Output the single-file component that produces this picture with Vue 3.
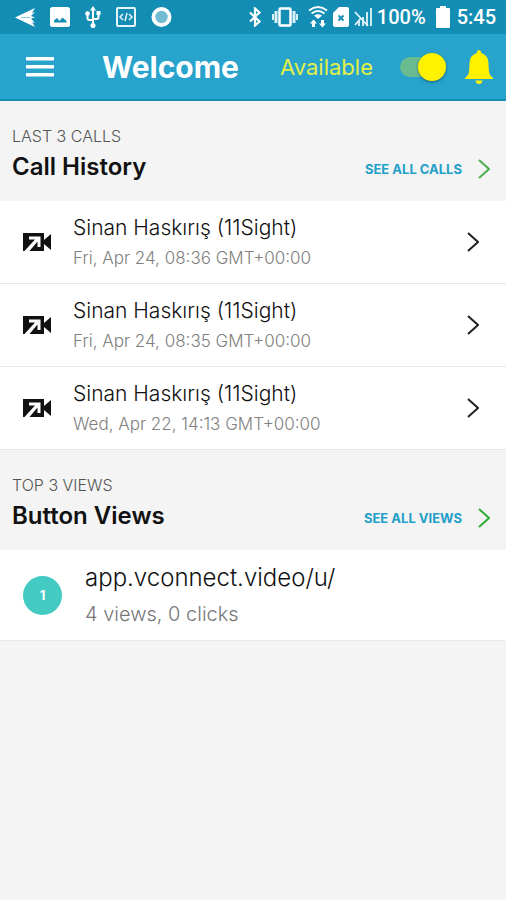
<script setup>
import { ref } from 'vue'

const available = ref(true)

const calls = [
  { id: 1, name: 'Sinan Haskırış (11Sight)', time: 'Fri, Apr 24, 08:36 GMT+00:00' },
  { id: 2, name: 'Sinan Haskırış (11Sight)', time: 'Fri, Apr 24, 08:35 GMT+00:00' },
  { id: 3, name: 'Sinan Haskırış (11Sight)', time: 'Wed, Apr 22, 14:13 GMT+00:00' },
]

const views = [{ rank: 1, url: 'app.vconnect.video/u/', stats: '4 views, 0 clicks' }]
</script>

<template>
  <div class="screen">
    <div class="status">
      <div class="status-left">
        <svg width="20" height="20" viewBox="0 0 20 20" fill="#fff">
          <path d="M0 10.500L20 1l-3 5 3-1-4 4 4 1.500-4 1 4 4.500-3-1 3 5z" />
          <path d="M6 10.500h9" stroke="#148db4" stroke-width=".5" />
        </svg>
        <svg width="20" height="20" viewBox="0 0 20 20">
          <rect width="20" height="20" rx="2.500" fill="#fff" />
          <path d="M4 15.500v-2l3-2.500 2.500 3 3-3.500 4 3.500v1.500z" fill="#148db4" />
        </svg>
        <svg width="16" height="22" viewBox="0 0 16 22" fill="none" stroke="#fff" stroke-width="2">
          <path d="M8 3v16M2.500 8v4q0 2 2 2H8M13.500 7v4q0 2-2 2H8" />
          <g fill="#fff" stroke="none">
            <path d="M8 0l3 4.500H5z" />
            <circle cx="8" cy="19.500" r="2.500" />
            <circle cx="2.500" cy="7.500" r="2.300" />
            <path d="M11.500 5h4v4h-4z" />
          </g>
        </svg>
        <svg width="20" height="20" viewBox="0 0 20 20" fill="none" stroke="#e4f5fb">
          <rect x="1" y="1" width="18" height="18" rx="1" stroke-width="2" />
          <path d="M7 7l-3 3 3 3M13 7l3 3-3 3M11 6l-2 8" stroke-width="1.500" />
        </svg>
        <svg width="21" height="22" viewBox="0 0 22 22">
          <circle cx="11" cy="11" r="8.500" fill="#72bbd2" stroke="#fff" stroke-width="4" />
        </svg>
      </div>
      <div class="status-right">
        <svg class="spaced" width="14" height="20" viewBox="0 0 14 20" fill="none" stroke="#fff" stroke-width="2.200">
          <path d="M2 5.500l9.500 9L7 18.500v-17l4.500 4L2 14.500" />
        </svg>
        <svg class="spaced" width="26" height="20" viewBox="0 0 26 20" fill="none" stroke="#fff">
          <rect x="7.500" y="1.500" width="11" height="17" rx="1" stroke-width="2.500" />
          <path d="M4 4v12M22 4v12" stroke-width="3" stroke="#d8f0f8" />
          <path d="M1 7v6M25 7v6" stroke-width="2" stroke="#d8f0f8" />
        </svg>
        <svg width="20" height="22" viewBox="0 0 20 22" fill="none" stroke="#fff">
          <path d="M1 4.500q9-7 18 0M3.500 7.500q6.500-5 13 0" stroke-width="1.900" />
          <path d="M6 9.500q4-2.500 8 0L10 13z" fill="#fff" stroke="none" />
          <path d="M5.500 21v-4M14.500 14v4" stroke-width="3" />
          <path d="M5.500 13.500l3.500 4H2zM14.500 21.500l3.500-4h-7z" fill="#fff" stroke="none" />
        </svg>
        <svg width="16" height="20" viewBox="0 0 16 20">
          <path d="M6 0h8q2 0 2 2v16q0 2-2 2H2q-2 0-2-2V6z" fill="#fff" />
          <path d="M5.500 8.500l5 5m0-5l-5 5" stroke="#148db4" stroke-width="1.800" />
        </svg>
        <svg width="18" height="20" viewBox="0 0 18 20" fill="none" stroke="#e4f5fb">
          <path d="M17 1v18M13 5v14M9 10v9M5 14v5" stroke-width="1.800" />
          <path d="M1 5l13 14M7 11l-6 7" stroke-width="1.800" />
        </svg>
        <span class="spaced">100%</span>
        <svg width="14" height="22" viewBox="0 0 14 22" fill="#fff">
          <path d="M4 0h6v2h3q1 0 1 1v18q0 1-1 1H1q-1 0-1-1V3q0-1 1-1h3z" />
        </svg>
        <span class="clock">5:45</span>
      </div>
    </div>

    <header class="appbar">
      <button class="icon-button" type="button" aria-label="Menu">
        <svg width="28" height="20" viewBox="0 0 28 20" fill="#fff">
          <path d="M0 0h28v3.500H0zM0 8h28v3.500H0zM0 16h28v3.500H0z" />
        </svg>
      </button>
      <h1>Welcome</h1>
      <label class="available" for="availability">Available</label>
      <input id="availability" v-model="available" class="switch" type="checkbox" role="switch" />
      <button class="icon-button" type="button" aria-label="Notifications">
        <svg width="28" height="34" viewBox="0 0 28 34" fill="#fff200">
          <path d="M14 0q2 0 2.200 3Q23 5 23.500 13q0 9 1.500 12l3 3v1H0v-1l3-3q1.500-3 1.500-12Q5 5 11.800 3 12 0 14 0z" />
          <path d="M10.500 30.500h7q-.5 3.500-3.500 3.500t-3.500-3.500z" />
        </svg>
      </button>
    </header>

    <main>
      <section>
        <div class="section-head">
          <div>
            <p class="eyebrow">LAST 3 CALLS</p>
            <h2>Call History</h2>
          </div>
          <a class="see-all" href="#calls">
            SEE ALL CALLS
            <svg width="12" height="20" viewBox="0 0 12 20" fill="none" stroke="#4caf50" stroke-width="2">
              <path d="M1 1l10 9-10 9" />
            </svg>
          </a>
        </div>
        <ul>
          <li v-for="call in calls" :key="call.id">
            <a class="row call" href="#call">
              <svg width="28" height="18" viewBox="0 0 28 18">
                <path d="M0 0h21v18H0z" fill="#111" />
                <path d="M28 1v16l-7-6V7z" fill="#111" />
                <path d="M6 3.500h11.500V14h-3V8.500L6.500 18H1.500L12 6.500H6z" fill="#fff" />
              </svg>
              <span class="row-text">
                <span class="name">{{ call.name }}</span>
                <span class="time">{{ call.time }}</span>
              </span>
              <svg width="12" height="20" viewBox="0 0 12 20" fill="none" stroke="#222" stroke-width="2">
                <path d="M1 1l10 9-10 9" />
              </svg>
            </a>
          </li>
        </ul>
      </section>

      <section>
        <div class="section-head">
          <div>
            <p class="eyebrow">TOP 3 VIEWS</p>
            <h2>Button Views</h2>
          </div>
          <a class="see-all" href="#views">
            SEE ALL VIEWS
            <svg width="12" height="20" viewBox="0 0 12 20" fill="none" stroke="#2eae35" stroke-width="2">
              <path d="M1 1l10 9-10 9" />
            </svg>
          </a>
        </div>
        <ul>
          <li v-for="view in views" :key="view.rank">
            <a class="row view" href="#view">
              <span class="rank">{{ view.rank }}</span>
              <span class="row-text">
                <span class="url">{{ view.url }}</span>
                <span class="stats">{{ view.stats }}</span>
              </span>
            </a>
          </li>
        </ul>
      </section>
    </main>
  </div>
</template>

<style>
body {
  background: #f4f4f4;
}
</style>

<style scoped>
.screen {
  min-height: 100vh;
  background: #f4f4f4;
  color: #111;
  font-family: Inter, "Liberation Sans", sans-serif;
}

.screen * {
  box-sizing: border-box;
}

svg {
  display: block;
  flex: none;
}

.status {
  display: flex;
  align-items: center;
  justify-content: space-between;
  height: 34px;
  padding: 0 10px 0 15px;
  background: #148db4;
}

.status-left,
.status-right {
  display: flex;
  align-items: center;
}

.status-left {
  gap: 15px;
}

.status-right {
  gap: 5px;
  color: #fff;
  font: 500 20px/24px Roboto, sans-serif;
}

.spaced {
  margin-right: 5px;
}

.clock {
  margin-left: 2px;
}

.appbar {
  display: flex;
  align-items: center;
  height: 67px;
  padding: 0 13px 0 26px;
  border-bottom: 2px solid #148db4;
  background: #27a3cc;
}

.icon-button {
  padding: 0;
  border: 0;
  background: none;
}

h1 {
  flex: 1;
  margin: 0 0 0 48px;
  color: #fff;
  font-size: 30px;
  font-weight: 700;
  line-height: 36px;
}

.available {
  color: #e2f04a;
  font-size: 22px;
  line-height: 28px;
}

.switch {
  display: flex;
  flex: none;
  align-items: center;
  justify-content: flex-start;
  width: 46px;
  height: 20px;
  margin: 0 19px 0 27px;
  border-radius: 10px;
  background: #8fc4d6;
  appearance: none;
}

.switch::before {
  width: 28px;
  height: 28px;
  border-radius: 50%;
  background: #fff200;
  box-shadow: 0 1px 3px rgba(0, 0, 0, 0.4);
  content: "";
}

.switch:checked {
  justify-content: flex-end;
  background: #6bbb91;
}

.section-head {
  display: flex;
  align-items: center;
  justify-content: space-between;
  height: 100px;
  padding: 4px 16px 0 12px;
}

.eyebrow,
h2 {
  margin: 0;
}

.eyebrow {
  color: #555;
  font-size: 16px;
  font-weight: 300;
  line-height: 28px;
}

h2 {
  color: #111;
  font-size: 24px;
  font-weight: 600;
  line-height: 34px;
}

.see-all {
  display: flex;
  align-items: center;
  gap: 16px;
  padding-top: 32px;
  color: #239fc8;
  font-size: 13px;
  font-weight: 700;
  line-height: 20px;
  text-decoration: none;
}

ul {
  margin: 0;
  padding: 0;
  list-style: none;
}

.row {
  display: flex;
  align-items: center;
  border-bottom: 1px solid #e8e8e8;
  background: #fff;
  color: #111;
  text-decoration: none;
}

.row-text {
  display: flex;
  flex: 1;
  flex-direction: column;
  padding-top: 2px;
}

.call {
  gap: 22px;
  height: 83px;
  padding: 0 27px 0 23px;
}

.name {
  font-size: 21px;
  font-weight: 300;
  line-height: 30px;
}

.time {
  color: #808080;
  font-size: 17px;
  font-weight: 300;
  line-height: 30px;
}

.view {
  gap: 23px;
  height: 91px;
  padding: 0 23px;
}

.rank {
  display: grid;
  width: 39px;
  height: 39px;
  place-items: center;
  border-radius: 50%;
  background: #42cac3;
  color: #fff;
  font-size: 13px;
  font-weight: 700;
}

.url {
  font-size: 24px;
  font-weight: 300;
  line-height: 36px;
}

.stats {
  color: #777;
  font-size: 20px;
  font-weight: 300;
  line-height: 36px;
}
</style>
